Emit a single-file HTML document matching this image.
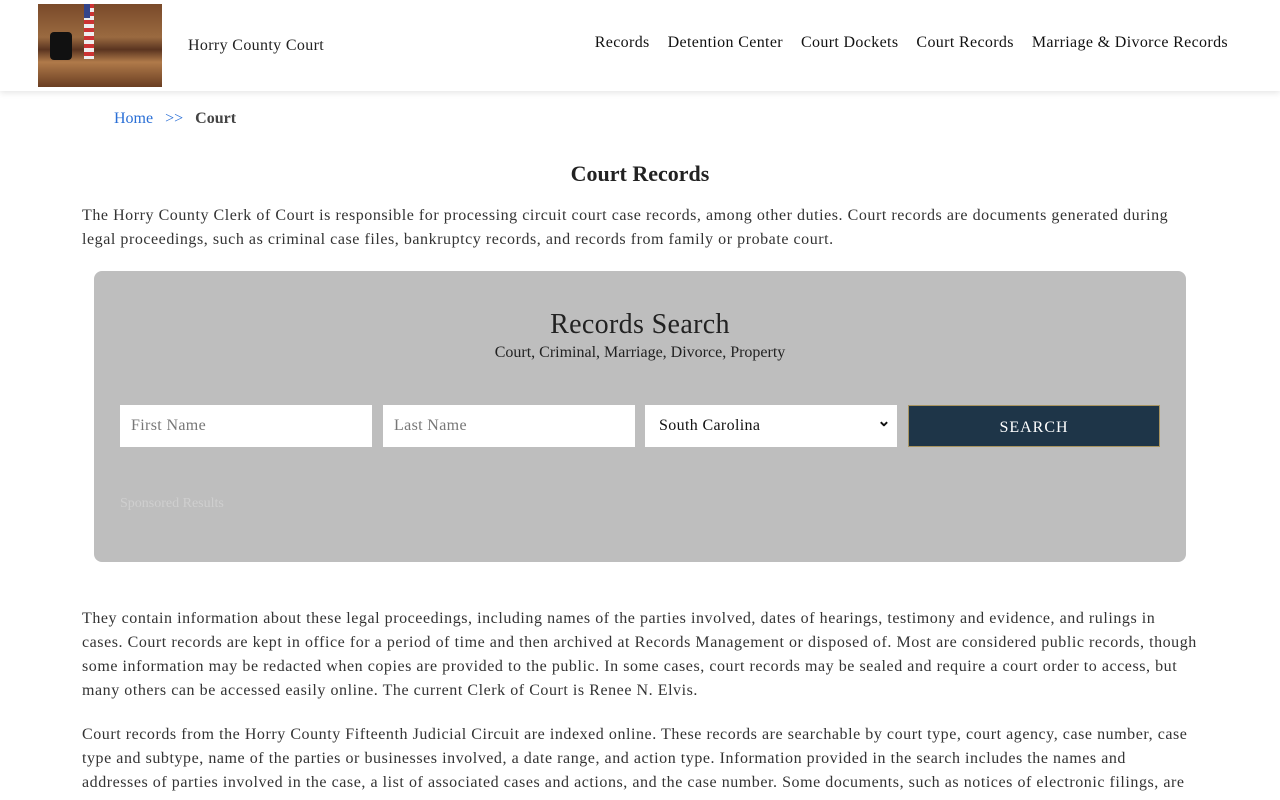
<!DOCTYPE html>
<html><head><meta charset="utf-8"><style>
*{box-sizing:border-box;margin:0;padding:0}
body{width:1280px;height:800px;overflow:hidden;background:#fff;font-family:"Liberation Serif",serif;color:#222;letter-spacing:0.35px}
.hdr{height:91px;position:relative;box-shadow:0 2px 6px rgba(0,0,0,.1);background:#fff}
.logo{position:absolute;left:38px;top:4px;width:124px;height:83px;background:linear-gradient(180deg,#7a4a2a 0%,#9a6a40 40%,#5a3420 55%,#b07a4a 70%,#6a3e22 100%)}
.logo .chair{position:absolute;left:12px;top:28px;width:22px;height:28px;background:#111;border-radius:4px}
.logo .flag{position:absolute;left:46px;top:0;width:10px;height:55px;background:repeating-linear-gradient(180deg,#c33 0 4px,#eee 4px 8px)}
.logo .flag:before{content:"";position:absolute;left:0;top:0;width:6px;height:14px;background:#33458a}
.site{position:absolute;left:188px;top:37px;font-size:16px;color:#222}
nav{position:absolute;right:52px;top:34px;font-size:16px}
nav a{margin-left:18px;color:#111;text-decoration:none}
.bc{position:absolute;left:114px;top:110px;font-size:16px;letter-spacing:0}
.bc a{color:#2a6fd6;text-decoration:none}
.bc b{color:#444}
h1{position:absolute;left:0;width:1280px;top:161px;text-align:center;font-size:22px;font-weight:bold;color:#222;letter-spacing:0}
p{position:absolute;left:82px;width:1200px;font-size:16px;line-height:24px;color:#333;white-space:nowrap;letter-spacing:0.55px}
.box{position:absolute;left:94px;top:271px;width:1092px;height:291px;background:#bebebe;border-radius:8px}
.box h2{position:absolute;top:38px;width:100%;text-align:center;font-size:28px;font-weight:normal;color:#222}
.box .sub{position:absolute;top:73px;width:100%;text-align:center;font-size:16px;color:#222;letter-spacing:0}
.in{position:absolute;top:134px;height:42px;width:252px;background:#fff;font-size:16px;color:#777;padding:12px 11px}
.sel{color:#111;padding-left:14px}
.sel:after{content:"⌄";position:absolute;right:6px;top:6px;font-size:16px;font-weight:bold;color:#111}
.btn{position:absolute;top:134px;left:814px;width:252px;height:42px;background:#1e3548;border:1px solid #a89460;color:#fff;text-align:center;font-size:16px;letter-spacing:1px;padding-top:13px}
.sp{position:absolute;left:26px;top:225px;font-size:14px;color:#cfcfcf;letter-spacing:0}
</style></head><body>
<div class="hdr"><div class="logo"><div class="chair"></div><div class="flag"></div></div>
<div class="site">Horry County Court</div>
<nav><a>Records</a><a>Detention Center</a><a>Court Dockets</a><a>Court Records</a><a>Marriage &amp; Divorce Records</a></nav></div>
<div class="bc"><a>Home</a>&nbsp;&nbsp;&nbsp;<a>&gt;&gt;</a>&nbsp;&nbsp;&nbsp;<b>Court</b></div>
<h1>Court Records</h1>
<p style="top:204px">The Horry County Clerk of Court is responsible for processing circuit court case records, among other duties. Court records are documents generated during<br>legal proceedings, such as criminal case files, bankruptcy records, and records from family or probate court.</p>
<div class="box"><h2>Records Search</h2><div class="sub">Court, Criminal, Marriage, Divorce, Property</div>
<div class="in" style="left:26px">First Name</div>
<div class="in" style="left:289px">Last Name</div>
<div class="in sel" style="left:551px">South Carolina</div>
<div class="btn">SEARCH</div>
<div class="sp">Sponsored Results</div></div>
<p style="top:607px">They contain information about these legal proceedings, including names of the parties involved, dates of hearings, testimony and evidence, and rulings in<br>cases. Court records are kept in office for a period of time and then archived at Records Management or disposed of. Most are considered public records, though<br>some information may be redacted when copies are provided to the public. In some cases, court records may be sealed and require a court order to access, but<br>many others can be accessed easily online. The current Clerk of Court is Renee N. Elvis.</p>
<p style="top:723px">Court records from the Horry County Fifteenth Judicial Circuit are indexed online. These records are searchable by court type, court agency, case number, case<br>type and subtype, name of the parties or businesses involved, a date range, and action type. Information provided in the search includes the names and<br>addresses of parties involved in the case, a list of associated cases and actions, and the case number. Some documents, such as notices of electronic filings, are</p>
</body></html>
